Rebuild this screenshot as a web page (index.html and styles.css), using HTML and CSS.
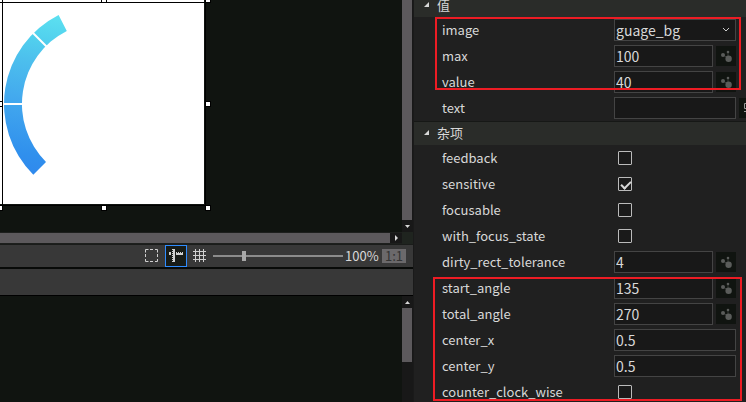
FILE: index.html
```html
<!DOCTYPE html>
<html lang="zh-CN">
<head>
<meta charset="utf-8">
<meta name="viewport" content="width=device-width, initial-scale=1">
<title>UI Designer</title>
<link rel="stylesheet" href="styles.css">
</head>
<body>
<svg class="defs" aria-hidden="true">
  <symbol id="bind" viewBox="0 0 20 20">
    <circle cx="7" cy="9" r="2"/><circle cx="12" cy="6" r="1.3"/><circle cx="12.6" cy="12.7" r="3.2"/>
    <path d="M7 9l5 3M12 6v4" stroke="currentColor" stroke-width=".5"/>
  </symbol>
</svg>
<div class="app">
  <main class="editor">
    <section class="stage">
      <svg class="canvas" viewBox="0 0 402 232" width="402" height="232" role="img" aria-label="gauge">
        <defs>
          <linearGradient id="ring" gradientUnits="userSpaceOnUse" x1="36" y1="175" x2="62" y2="15">
            <stop offset="0" stop-color="#2f89ed"/>
            <stop offset=".12" stop-color="#3090ed"/>
            <stop offset=".45" stop-color="#43a9ee"/>
            <stop offset=".7" stop-color="#4dc0ed"/>
            <stop offset=".85" stop-color="#52d2ee"/>
            <stop offset="1" stop-color="#5de1f0"/>
          </linearGradient>
        </defs>
        <rect width="204" height="204" fill="#fff"/>
        <path d="M33.3 174.7A100 100 0 0 1 58.6 14.9L66.8 30.9A82 82 0 0 0 46 162Z" fill="url(#ring)"/>
        <path d="M2 104H24M32 32L48 48" stroke="#fff" stroke-width="2"/>
        <path d="M0 2.5H205M2.5 0V205M205.5 0V206M0 205.5H206" fill="none" stroke="#000"/>
        <g fill="#fff" stroke="#000" shape-rendering="crispEdges">
          <rect x="-2.500" y="-2.500" width="5" height="5"/>
          <rect x="101.500" y="-2.500" width="5" height="5"/>
          <rect x="205.500" y="-2.500" width="5" height="5"/>
          <rect x="-2.500" y="101.500" width="5" height="5"/>
          <rect x="205.500" y="101.500" width="5" height="5"/>
          <rect x="-2.500" y="205.500" width="5" height="5"/>
          <rect x="101.500" y="205.500" width="5" height="5"/>
          <rect x="205.500" y="205.500" width="5" height="5"/>
        </g>
      </svg>
      <div class="vscroll">
        <div class="thumb"></div>
        <svg class="arrow" viewBox="0 0 10 12"><path d="M3 5h5L5.500 8z"/></svg>
      </div>
      <div class="hscroll">
        <div class="thumb"></div>
        <svg class="arrow" viewBox="0 0 12 10"><path d="M5 2v6l3-3z"/></svg>
      </div>
    </section>
    <div class="toolbar">
      <button class="tool" type="button" aria-label="Selection frame"><svg viewBox="0 0 20 20"><path d="M3.500 6.500v-3h3M8 3.500h3M13 3.500h2.500v3M15.500 8v3M15.500 13v2.500H13M11 15.500H8M6.500 15.500h-3V13M3.500 11V8"/></svg></button>
      <button class="tool active" type="button" aria-label="Rulers"><svg viewBox="0 0 20 20"><path class="solid" d="M3 6h2v3H3zM7 3h2v13H6v-1h1v-1H6v-1h1v-1H6v-1h1v-1H6V9h1V8H6V7h1V6H6V5h1V4H6V3zM10 6h1v1h1V6h1v1h1V6h1v1h1V6h1v3h-7z"/></svg></button>
      <button class="tool" type="button" aria-label="Grid"><svg viewBox="0 0 20 20"><path d="M5.500 3v13M9.500 3v13M13.500 3v13M3 5.500h13M3 9.500h13M3 13.500h13"/></svg></button>
      <input class="zoom" type="range" min="0" max="126" value="29" aria-label="Zoom">
      <output class="percent">100%</output>
      <button class="actual" type="button">1:1</button>
    </div>
    <div class="tabs"></div>
    <section class="output">
      <div class="vscroll">
        <svg class="arrow" viewBox="0 0 10 12"><path d="M3 8h5L5.500 5z"/></svg>
        <div class="thumb short"></div>
      </div>
    </section>
  </main>

  <aside class="props">
    <h2 class="group first"><svg viewBox="0 0 6 6"><path d="M5 0v5H0z"/></svg>值</h2>
    <div class="row"><label for="image">image</label>
      <span class="pick"><select id="image"><option>guage_bg</option></select><svg viewBox="0 0 8 6"><path d="M1 1l3 3 3-3"/></svg></span></div>
    <div class="row"><label for="max">max</label><input id="max" type="text" value="100"><button class="bind" type="button" aria-label="Bind max"><svg><use href="#bind"/></svg></button></div>
    <div class="row"><label for="value">value</label><input id="value" type="text" value="40"><button class="bind" type="button" aria-label="Bind value"><svg><use href="#bind"/></svg></button></div>
    <div class="row"><label for="text">text</label><input id="text" class="wide" type="text"><button class="bind more" type="button" aria-label="Edit text"><svg viewBox="0 0 20 20"><path d="M8 5.500H5.500v5H8M5 13.500h2" fill="none" stroke="currentColor"/></svg></button></div>

    <h2 class="group"><svg viewBox="0 0 6 6"><path d="M5 0v5H0z"/></svg>杂项</h2>
    <div class="row"><label for="feedback">feedback</label><input id="feedback" type="checkbox"></div>
    <div class="row"><label for="sensitive">sensitive</label><input id="sensitive" type="checkbox" checked></div>
    <div class="row"><label for="focusable">focusable</label><input id="focusable" type="checkbox"></div>
    <div class="row"><label for="focus-state">with_focus_state</label><input id="focus-state" type="checkbox"></div>
    <div class="row"><label for="tolerance">dirty_rect_tolerance</label><input id="tolerance" type="text" value="4"><button class="bind" type="button" aria-label="Bind tolerance"><svg><use href="#bind"/></svg></button></div>
    <div class="row"><label for="start">start_angle</label><input id="start" type="text" value="135"><button class="bind" type="button" aria-label="Bind start angle"><svg><use href="#bind"/></svg></button></div>
    <div class="row"><label for="total">total_angle</label><input id="total" type="text" value="270"><button class="bind" type="button" aria-label="Bind total angle"><svg><use href="#bind"/></svg></button></div>
    <div class="row"><label for="cx">center_x</label><input id="cx" class="wide" type="text" value="0.5"></div>
    <div class="row"><label for="cy">center_y</label><input id="cy" class="wide" type="text" value="0.5"></div>
    <div class="row"><label for="ccw">counter_clock_wise</label><input id="ccw" type="checkbox"></div>
    <div class="mark mark-value"></div>
    <div class="mark mark-angle"></div>
  </aside>
</div>
</body>
</html>
```
FILE: styles.css
```css
* { box-sizing: border-box; }

body {
  margin: 0;
  background: #101410;
  color: #d8d8d8;
  font: 13px/20px "Noto Sans CJK SC", "Noto Sans", sans-serif;
}

button, input, select { font: inherit; color: inherit; margin: 0; padding: 0; border: 0; border-radius: 0; }
svg { display: block; }
.defs { position: absolute; width: 0; height: 0; }

.app {
  display: grid;
  grid-template-columns: minmax(0, 1fr) 333px;
  height: 100vh;
  overflow: hidden;
}

/* Editor side */
.editor { display: flex; flex-direction: column; min-width: 0; }

.stage {
  display: grid;
  grid-template-columns: minmax(0, 1fr) 11px;
  grid-template-rows: 232px 12px;
  background: #1f241f;
}
.canvas { background: #101410; width: 100%; }

.vscroll, .hscroll { display: flex; background: #181818; }
.vscroll { flex-direction: column; width: 11px; padding-right: 1px; }
.vscroll .arrow { width: 10px; height: 12px; }
.hscroll { border-top: 1px solid #1d1f1d; border-bottom: 1px solid #1d1f1d; }
.hscroll .arrow { width: 12px; height: 10px; }
.arrow { fill: #d8d8d8; flex: none; }
.thumb { flex: 1; background: #5c595c; }
.thumb.short { flex: 0 0 54px; }

.toolbar {
  display: flex;
  align-items: center;
  justify-content: flex-end;
  height: 23px;
  padding-right: 7px;
  background: #383838;
  border-top: 1px solid #1a1c1a;
}
.tool { width: 22px; height: 22px; padding: 1px; background: none; margin-right: 2px; }
.tool svg { width: 20px; height: 20px; fill: none; stroke: #d0d0d0; }
.tool .solid { fill: #d0d0d0; stroke: none; }
.tool.active { background: #181c18; border: 1px solid #2f8cff; padding: 0; }

.zoom {
  appearance: none;
  width: 130px;
  height: 10px;
  background: linear-gradient(#8c8c8c, #8c8c8c) center / 100% 2px no-repeat;
}
.zoom::-webkit-slider-thumb { appearance: none; width: 4px; height: 10px; background: #a8a8a8; }

.percent { width: 34px; margin: 0 3px 0 2px; }
.actual { width: 24px; height: 14px; background: #6b696b; color: #333; line-height: 14px; }

.tabs { height: 29px; background: #383838; border-top: 2px solid #080a08; border-bottom: 1px solid #000; }
.output { flex: 1; display: flex; justify-content: flex-end; background: #101410; }

/* Property panel */
.props { position: relative; overflow: hidden; background: #202020; border-left: 1px solid #1a1a1a; }

.group {
  display: flex;
  align-items: center;
  gap: 7px;
  height: 24px;
  margin: 0;
  padding: 0 0 2px 10px;
  background: #2a2c29;
  border-top: 1px solid #161816;
  font-size: 13px;
  font-weight: 400;
}
.group.first { margin-top: -7px; }
.group svg { width: 6px; height: 6px; fill: #d8d8d8; }

.row {
  display: grid;
  grid-template-columns: 169px 99px 20px 20px;
  column-gap: 3px;
  align-items: center;
  height: 26px;
  padding-left: 28px;
}
.row input[type="text"], .row select {
  width: 100%;
  height: 22px;
  padding-left: 1px;
  background: #181818;
  border: 1px solid #444;
  outline: 0;
  font-size: 14px;
}
.row .wide, .row .pick { grid-column: 2 / span 2; }

.pick { display: grid; align-items: center; }
.pick > * { grid-area: 1 / 1; }
.pick select { appearance: none; }
.pick svg { width: 8px; height: 6px; margin-right: 6px; justify-self: end; fill: none; stroke: #ccc; pointer-events: none; }

.bind { width: 20px; height: 20px; background: #101410; color: #5a5c5a; }
.bind svg { width: 20px; height: 20px; fill: currentColor; }
.bind.more { color: #999; }

.row input[type="checkbox"] {
  appearance: none;
  width: 14px;
  height: 14px;
  margin-left: 4px;
  background: #1a1a1a;
  border: 1px solid #bbb;
  border-radius: 1px;
}
.row input[type="checkbox"]:checked::before {
  content: "";
  display: block;
  width: 8px;
  height: 4px;
  margin: 3px 2px;
  border: solid #d8d8d8;
  border-width: 0 0 2px 2px;
  transform: rotate(-45deg);
}

/* Callout frames over the panel */
.mark { position: absolute; border: 2px solid #ed1c24; pointer-events: none; }
.mark-value { inset: 17px 5px auto 21px; height: 73px; }
.mark-angle { inset: 277px 4px auto 19px; height: 124px; }
```
